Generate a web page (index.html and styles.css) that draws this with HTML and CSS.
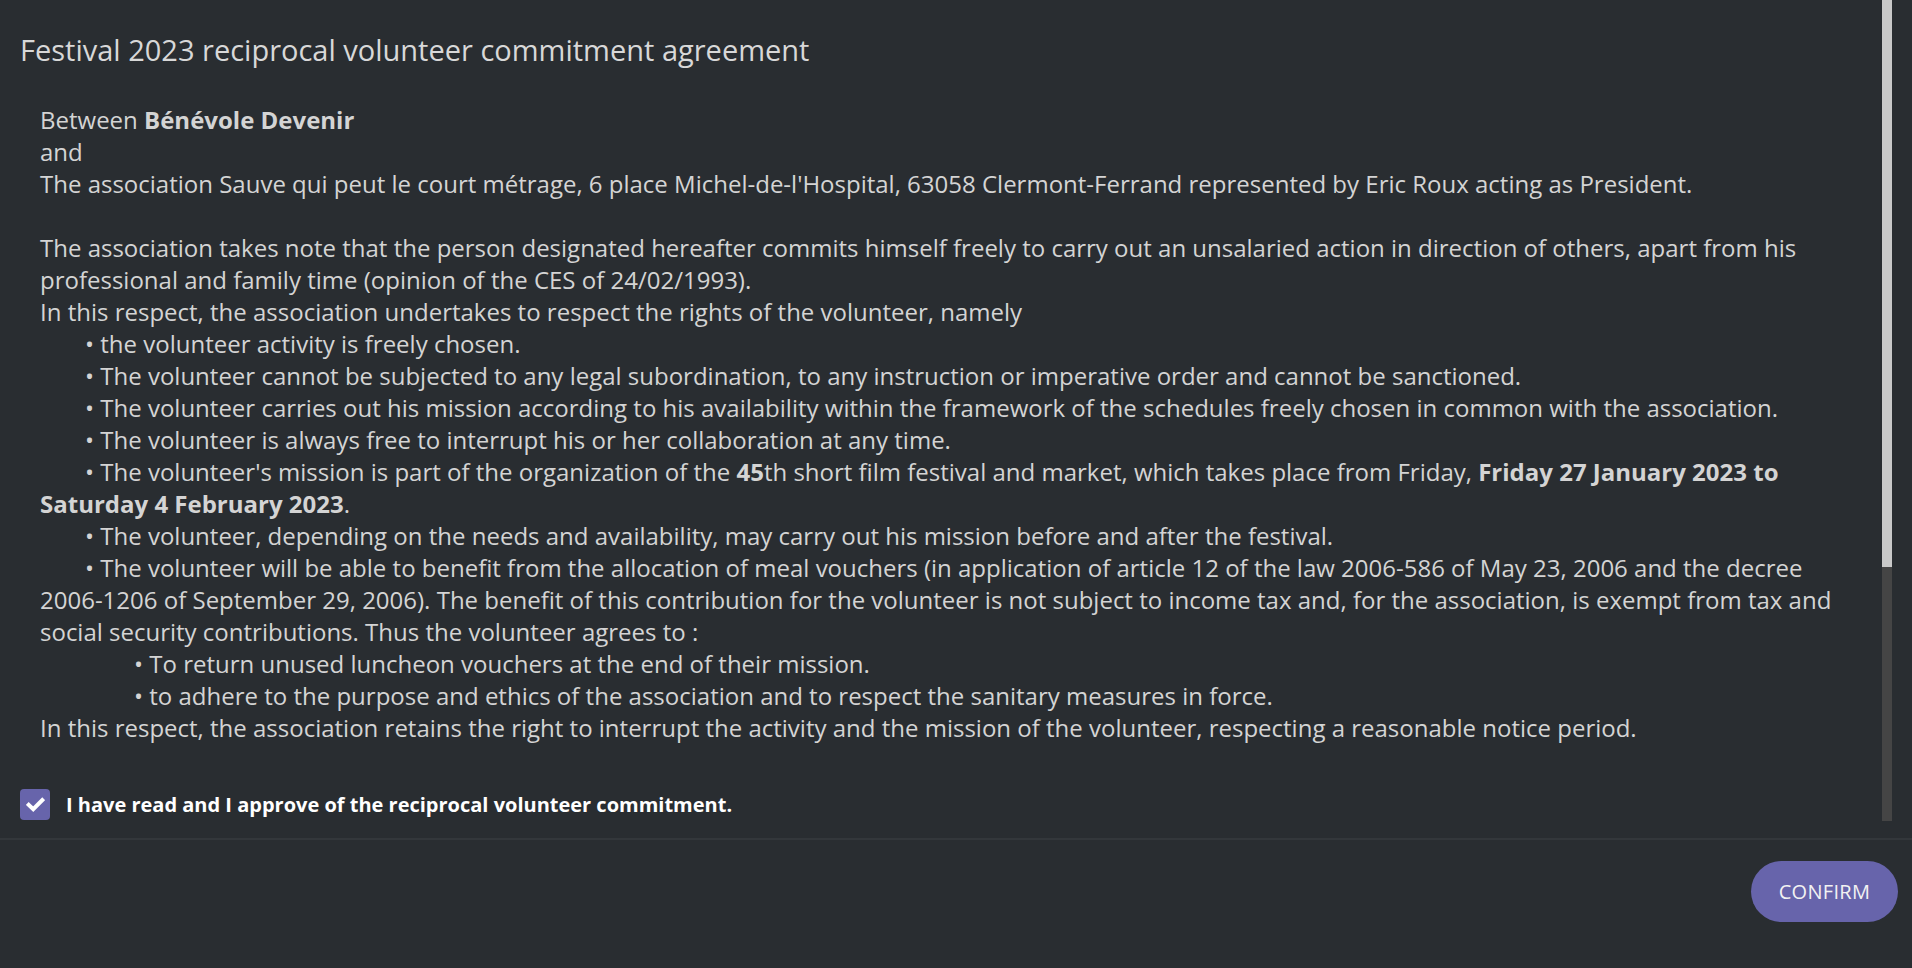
FILE: index.html
```html
<!DOCTYPE html>
<html lang="en">
<head>
<meta charset="utf-8">
<title>Festival 2023 reciprocal volunteer commitment agreement</title>
<link rel="stylesheet" href="styles.css">
</head>
<body>
<div class="dialog">
  <div class="scroll-area">
    <div class="content">
      <h1 class="title">Festival 2023 reciprocal volunteer commitment agreement</h1>
      <div class="agreement">
        <p class="line">Between <b>Bénévole Devenir</b></p>
        <p class="line">and</p>
        <p class="line">The association Sauve qui peut le court métrage, 6 place Michel-de-l'Hospital, 63058 Clermont-Ferrand represented by Eric Roux acting as President.</p>
        <p class="line blank">&nbsp;</p>
        <p class="line">The association takes note that the person designated hereafter commits himself freely to carry out an unsalaried action in direction of others, apart from his professional and family time (opinion of the CES of 24/02/1993).</p>
        <p class="line">In this respect, the association undertakes to respect the rights of the volunteer, namely</p>
        <p class="line bullet">• the volunteer activity is freely chosen.</p>
        <p class="line bullet">• The volunteer cannot be subjected to any legal subordination, to any instruction or imperative order and cannot be sanctioned.</p>
        <p class="line bullet">• The volunteer carries out his mission according to his availability within the framework of the schedules freely chosen in common with the association.</p>
        <p class="line bullet">• The volunteer is always free to interrupt his or her collaboration at any time.</p>
        <p class="line bullet">• The volunteer's mission is part of the organization of the <b>45</b>th short film festival and market, which takes place from Friday, <b>Friday 27 January 2023 to Saturday 4 February 2023</b>.</p>
        <p class="line bullet">• The volunteer, depending on the needs and availability, may carry out his mission before and after the festival.</p>
        <p class="line bullet">• The volunteer will be able to benefit from the allocation of meal vouchers (in application of article 12 of the law 2006-586 of May 23, 2006 and the decree 2006-1206 of September 29, 2006). The benefit of this contribution for the volunteer is not subject to income tax and, for the association, is exempt from tax and social security contributions. Thus the volunteer agrees to :</p>
        <p class="line subbullet">• To return unused luncheon vouchers at the end of their mission.</p>
        <p class="line subbullet">• to adhere to the purpose and ethics of the association and to respect the sanitary measures in force.</p>
        <p class="line">In this respect, the association retains the right to interrupt the activity and the mission of the volunteer, respecting a reasonable notice period.</p>
      </div>
      <label class="approve">
        <span class="checkbox">
          <svg viewBox="0 0 16 16" width="19" height="19" aria-hidden="true"><path d="M2.3 8.3 L6.1 12 L13.7 4.3" fill="none" stroke="#ffffff" stroke-width="3.4" stroke-linecap="square" stroke-linejoin="miter"/></svg>
        </span>
        <span class="approve-text">I have read and I approve of the reciprocal volunteer commitment.</span>
      </label>
    </div>
    <div class="scrollbar">
      <div class="scrollbar-thumb"></div>
    </div>
  </div>
  <div class="footer">
    <button class="confirm" type="button">Confirm</button>
  </div>
</div>
</body>
</html>
```

FILE: styles.css
```css
html, body {
  margin: 0;
  padding: 0;
  height: 100%;
  background: #292d31;
}

body {
  font-family: "Open Sans", "Liberation Sans", sans-serif;
  color: #d4d4d4;
  overflow: hidden;
}

.dialog {
  display: flex;
  flex-direction: column;
  height: 968px;
}

.scroll-area {
  height: 821px;
  flex: none;
  display: flex;
  padding-right: 20px;
}

.content {
  flex: 1;
  min-width: 0;
  overflow: hidden;
  padding: 0 20px;
}

.scrollbar {
  width: 10px;
  flex: none;
  background: #454545;
  display: flex;
  flex-direction: column;
}

.scrollbar-thumb {
  height: 567px;
  background: #c9c9c9;
}

.title {
  margin: 0;
  padding-top: 34px;
  font-size: 29px;
  font-weight: 500;
  line-height: 32px;
  color: #d8d8d8;
}

.agreement {
  padding-top: 38px;
  padding-left: 20px;
  font-size: 24px;
  line-height: 32px;
}

.agreement b {
  font-weight: 700;
}

.line {
  margin: 0;
}

.bullet {
  text-indent: 45px;
}

.subbullet {
  text-indent: 94px;
}

.approve {
  display: flex;
  align-items: center;
  gap: 16px;
  margin-top: 45px;
  height: 31px;
}

.checkbox {
  width: 30px;
  height: 31px;
  border-radius: 4px;
  background: #6764ab;
  display: flex;
  align-items: center;
  justify-content: center;
  flex: none;
}

.approve-text {
  font-size: 20px;
  font-weight: 700;
  color: #ffffff;
}

.footer {
  border-top: 2px solid #33373b;
  margin-top: 17px;
  display: flex;
  justify-content: flex-end;
  padding: 21px 14px 0 0;
}

.confirm {
  width: 147px;
  height: 61px;
  border: none;
  border-radius: 31px;
  background: #6764ab;
  color: #f2f2f2;
  font-family: "Open Sans", "Liberation Sans", sans-serif;
  font-size: 20px;
  font-weight: 400;
  text-transform: uppercase;
  letter-spacing: 0.3px;
  cursor: pointer;
}
```
